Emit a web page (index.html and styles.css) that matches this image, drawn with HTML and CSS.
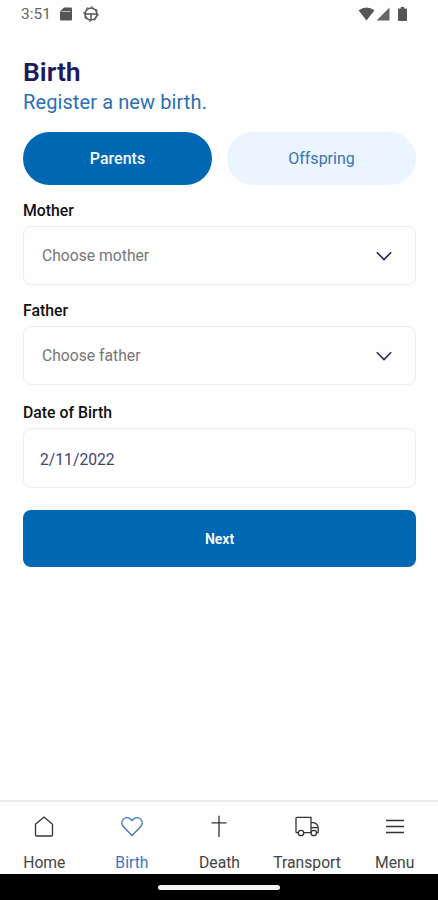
FILE: index.html
```html
<!DOCTYPE html>
<html lang="en">
<head>
<meta charset="utf-8">
<title>Birth</title>
<link rel="stylesheet" href="styles.css">
</head>
<body>
<div class="app">
  <header class="status">
    <span class="time">3:51</span>
    <svg class="sd" width="12" height="14" viewBox="0 0 12 14"><path d="M4 .5h7a1 1 0 0 1 1 1v11a1 1 0 0 1-1 1H1a1 1 0 0 1-1-1V4.500z" fill="#555"/><path d="M1.500 4.500h9" stroke="#bbb"/></svg>
    <svg class="wheel" width="16" height="16" viewBox="0 0 16 16" fill="none" stroke="#555"><circle cx="8" cy="8" r="6" stroke-width="1.700"/><path d="M2 8h12M8 8v6" stroke-width="1.500"/><circle cx="8" cy="8" r="7.200" stroke-width="1" stroke-dasharray="2 3.650"/></svg>
    <span class="grow"></span>
    <svg width="17" height="14" viewBox="0 0 17 14"><path d="M.5 3.200Q8.500-2.400 16.500 3.200L8.500 13.500z" fill="#555"/></svg>
    <svg class="signal" width="14" height="14" viewBox="0 0 14 14"><path d="M13.500.5v13H.5z" fill="#666"/></svg>
    <svg class="battery" width="9" height="14" viewBox="0 0 9 14"><path d="M2.800 0h3.400v1.500H8q1 0 1 1V13q0 1-1 1H1q-1 0-1-1V2.500q0-1 1-1h1.800z" fill="#555"/></svg>
  </header>
  <main class="content">
    <h1>Birth</h1>
    <p class="subtitle">Register a new birth.</p>
    <div class="tabs">
      <button class="tab active">Parents</button>
      <button class="tab">Offspring</button>
    </div>
    <div class="field">
      <label>Mother</label>
      <div class="box"><span>Choose mother</span><svg width="16" height="10" viewBox="0 0 16 10"><path d="M.8 1.300L8 8.500l7.200-7.200"/></svg></div>
    </div>
    <div class="field">
      <label>Father</label>
      <div class="box"><span>Choose father</span><svg width="16" height="10" viewBox="0 0 16 10"><path d="M.8 1.300L8 8.500l7.200-7.200"/></svg></div>
    </div>
    <div class="field dob">
      <label>Date of Birth</label>
      <div class="box date"><span>2/11/2022</span></div>
    </div>
    <button class="next">Next</button>
  </main>
  <nav class="nav">
    <a class="item"><svg width="24" height="24" viewBox="0 0 24 24"><path d="M3.500 9.200L12 2l8.500 7.200v10.800a1 1 0 0 1-1 1h-15a1 1 0 0 1-1-1z"/></svg><span>Home</span></a>
    <a class="item current"><svg width="24" height="24" viewBox="0 0 24 24"><path d="M12 20.500L3.400 11.700C1.200 9.500 1.200 6.100 3.300 4.100c2.200-2.100 5.500-1.900 7.500.2L12 5.600l1.200-1.300c2-2.100 5.300-2.300 7.500-.2 2.100 2 2.100 5.400-.1 7.600z"/></svg><span>Birth</span></a>
    <a class="item"><svg width="24" height="24" viewBox="0 0 24 24"><path d="M12 .8v21.200M4.500 7.900h15"/></svg><span>Death</span></a>
    <a class="item"><svg width="24" height="24" viewBox="0 0 24 24"><path d="M3.500 17.700H2a1 1 0 0 1-1-1V3.300a1 1 0 0 1 1-1h14v15.400H8.500M16 7.700h2.500q4.700 1 4.700 6v4h-1.500M16 12.700h7"/><circle cx="6" cy="18" r="2.700"/><circle cx="18.800" cy="18" r="2.700"/></svg><span>Transport</span></a>
    <a class="item"><svg width="24" height="24" viewBox="0 0 24 24"><path d="M3 5.500h18M3 11.500h18M3 17.500h18"/></svg><span>Menu</span></a>
  </nav>
  <footer class="gesture"><i></i></footer>
</div>
</body>
</html>
```
FILE: styles.css
```css
* { box-sizing: border-box; }
body { margin: 0; background: #fff; font-family: Roboto, "Liberation Sans", sans-serif; }
button { border: 0; padding: 0; font-family: inherit; }
.app { width: 438px; height: 900px; display: flex; flex-direction: column; overflow: hidden; background: #fefefe; }
.status { height: 28px; display: flex; align-items: center; padding: 0 31px 0 21px; flex: none; }
.time { font-size: 15.500px; color: #666; width: 39px; line-height: 28px; }
.wheel { margin-left: 11px; }
.grow { flex: 1; }
.signal { margin-left: 1px; }
.battery { margin-left: 8px; }
.content { flex: 1; padding: 28px 22px 0 23px; }
h1 { margin: 0; font-size: 26.500px; font-weight: 600; line-height: 32px; color: #1b1b5e; }
.subtitle { margin: 0; font-size: 20px; line-height: 28px; letter-spacing: .1px; color: #2d6eb5; }
.tabs { display: flex; gap: 15px; margin-top: 16px; }
.tab { flex: 1; height: 53px; border-radius: 27px; background: #eaf5ff; color: #3c73b3; font-size: 16px; line-height: 20px; }
.tab.active { background: #0067b3; color: #f4f9ff; font-weight: 500; }
.field { margin-top: 16px; }
label { display: block; font-size: 15.800px; font-weight: 500; line-height: 20px; color: #111; }
.box { height: 59px; margin-top: 5px; padding: 0 23px 0 18px; border: 1.500px solid #eee; border-radius: 8px; display: flex; align-items: center; justify-content: space-between; color: #777; font-size: 15.700px; }
.box svg { fill: none; stroke: #25255f; stroke-width: 1.600; }
.dob { margin-top: 18px; }
.date { height: 60px; color: #44446a; padding: 2px 24px 0 16px; }
.next { display: block; width: 100%; height: 57px; margin-top: 22px; border-radius: 8px; background: #0067b3; color: #fff; font-size: 14px; font-weight: 600; }
.nav { height: 74px; flex: none; display: grid; grid-template-columns: repeat(5, 1fr); border-top: 2px solid #eaeaea; }
.item { display: flex; flex-direction: column; align-items: center; padding: 13px 0 0 1px; color: #444; font-size: 15.700px; line-height: 20px; }
.item svg { fill: none; stroke: #333; stroke-width: 1.300; margin-bottom: 14px; }
.item.current { color: #3c76c2; }
.item.current svg { stroke: #3c76c2; }
.gesture { height: 26px; flex: none; background: #000; display: flex; align-items: center; justify-content: center; }
.gesture i { width: 122px; height: 5px; border-radius: 3px; background: #f4f4f4; }
```
